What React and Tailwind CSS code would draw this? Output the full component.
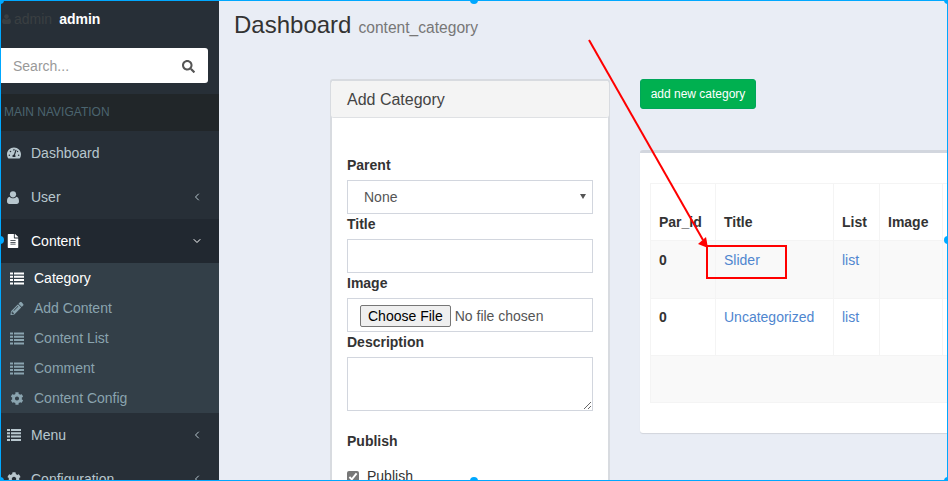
import { ChevronDown, ChevronLeft } from "lucide-react";
import { FaCog, FaFileAlt, FaPencilAlt, FaSearch, FaTachometerAlt } from "react-icons/fa";

const ListIcon = ({ className }) => (
  <svg className={className} viewBox="0 0 14 12" fill="currentColor">
    <path d="M0 0h3v2H0zM4 0h10v2H4zM0 3.3h3v2H0zM4 3.3h10v2H4zM0 6.6h3v2H0zM4 6.6h10v2H4zM0 10h3v2H0zM4 10h10v2H4z" />
  </svg>
);

const UserIcon = ({ className }) => (
  <svg className={className} viewBox="0 0 12 13" fill="currentColor">
    <circle cx="6" cy="3.3" r="3.1" />
    <path d="M2.6 5.7C3.5 6.8 4.7 7.2 6 7.2s2.5-.4 3.4-1.5c1.6.3 2.6 1.8 2.6 4.6 0 1.7-1 2.7-2.4 2.7H2.4C1 13 0 12 0 10.3c0-2.8 1-4.3 2.6-4.6z" />
  </svg>
);

const navTop = [
  { label: "Dashboard", icon: FaTachometerAlt },
  { label: "User", icon: UserIcon, arrow: true, iconClass: "w-[12px] h-[13px]" }
];

const subItems = [
  { label: "Category", icon: ListIcon, active: true },
  { label: "Add Content", icon: FaPencilAlt },
  { label: "Content List", icon: ListIcon },
  { label: "Comment", icon: ListIcon },
  { label: "Content Config", icon: FaCog }
];

const navBottom = [
  { label: "Menu", icon: ListIcon, arrow: true },
  { label: "Configuration", icon: FaCog, arrow: true }
];

const NavRow = ({ item }) => {
  const Icon = item.icon;
  return (
    <div className="h-[44px] flex items-center pl-[7px] pr-[16px] text-[#b8c7ce] text-[14px]">
      <span className="w-[24px] shrink-0"><Icon className={item.iconClass || "w-[14px] h-[14px]"} /></span>
      <span className="flex-1">{item.label}</span>
      {item.arrow && <ChevronLeft className="w-[12px] h-[12px]" strokeWidth={2} />}
    </div>
  );
};

const Sidebar = () => (
  <aside className="w-[219px] shrink-0 h-[481px] bg-[#272f37] overflow-hidden">
    <div className="h-[48px] flex items-center pb-[10px] pl-[2px] text-[14px]">
      <UserIcon className="w-[9px] h-[10px] text-[#3a3f42]" />
      <span className="ml-[3px] text-[#3a3f42]">admin</span>
      <span className="ml-[7px] text-white font-bold">admin</span>
    </div>
    <div className="w-[208px] h-[35px] bg-white rounded-r-[3px] flex items-center pl-[13px] pr-[13px] pt-[1px]">
      <span className="flex-1 text-[14px] text-[#999]">Search...</span>
      <FaSearch className="w-[13px] h-[13px] text-[#555]" />
    </div>
    <div className="mt-[11px] h-[37px] bg-[#212629] flex items-center pl-[4px] pb-[2px] text-[12px] text-[#4b646f]">MAIN NAVIGATION</div>
    {navTop.map((item) => <NavRow key={item.label} item={item} />)}
    <div className="h-[44px] bg-[#212830] flex items-center pl-[7px] pr-[16px] text-white text-[14px]">
      <span className="w-[24px] shrink-0"><FaFileAlt className="w-[12px] h-[14px]" /></span>
      <span className="flex-1">Content</span>
      <ChevronDown className="w-[12px] h-[12px]" strokeWidth={2} />
    </div>
    <div className="bg-[#333f48] h-[150px]">
      {subItems.map((item) => {
        const Icon = item.icon;
        return (
          <div key={item.label} className={`h-[30px] flex items-center pl-[10px] text-[14px] ${item.active ? "text-white" : "text-[#8aa4af]"}`}>
            <span className="w-[24px] shrink-0"><Icon className="w-[14px] h-[13px]" /></span>
            <span>{item.label}</span>
          </div>
        );
      })}
    </div>
    {navBottom.map((item) => <NavRow key={item.label} item={item} />)}
  </aside>
);

const labelClass = "block text-[14px] leading-[20px] font-bold text-[#333]";
const fieldClass = "block w-[246px] border border-[#d2d6de] bg-white text-[14px] text-[#555]";

const AddCategory = () => (
  <div className="w-[280px] shrink-0 h-[421px] -mt-[1px] bg-white border-x-2 border-t-2 border-[#d8dbe0] rounded-t-[3px]">
    <div className="h-[37px] -mx-[1px] bg-[#f4f4f4] border-b border-[#dfe1e4] rounded-[3px] flex items-center pl-[16px] pt-[1px] text-[16px] text-[#444]">Add Category</div>
    <div className="pl-[15px] pt-[37px]">
      <label className={labelClass}>Parent</label>
      <div className="relative w-[246px] mt-[5px]">
        <select className={`${fieldClass} h-[34px] pl-[16px] appearance-none`} defaultValue="None">
          <option>None</option>
        </select>
        <span className="absolute right-[7px] top-[14px] border-x-[3px] border-t-[5px] border-x-transparent border-t-[#555]" />
      </div>
      <label className={labelClass}>Title</label>
      <input type="text" className={`${fieldClass} h-[34px] mt-[5px]`} />
      <label className={labelClass}>Image</label>
      <div className={`${fieldClass} h-[34px] mt-[5px] pl-[12px] pt-[1px] flex items-center`}>
        <input type="file" className="w-[220px] text-[14px] file:mr-[4px] file:h-[22px] file:px-[7px] file:text-black file:bg-[#efefef] file:border file:border-[#767676] file:rounded-[2px]" />
      </div>
      <label className={labelClass}>Description</label>
      <textarea className={`${fieldClass} h-[54px] mt-[5px]`} />
      <label className={`${labelClass} mt-[20px]`}>Publish</label>
      <div className="mt-[15px] flex items-center gap-[8px] text-[14px] text-[#333]">
        <input type="checkbox" defaultChecked readOnly className="w-[12px] h-[12px] accent-[#777]" />
        <span>Publish</span>
      </div>
    </div>
  </div>
);

const cellBorder = "border border-[#f4f4f4] px-[8px] text-left";

const CategoryTable = () => (
  <div className="w-[420px] shrink-0 -mt-[1px]">
    <button className="w-[116px] h-[30px] bg-[#00b050] border border-[#00a65a] rounded-[3px] text-white text-[12px]">add new category</button>
    <div className="mt-[41px] h-[283px] bg-white border-t-[3px] border-[#d2d6de] rounded-[3px] shadow-[0_1px_1px_rgba(0,0,0,0.1)] pl-[10px] pt-[30px]">
      <table className="w-[400px] table-fixed border-collapse text-[14px] text-[#333]">
        <colgroup>
          <col className="w-[65px]" />
          <col className="w-[118px]" />
          <col className="w-[46px]" />
          <col className="w-[63px]" />
          <col />
        </colgroup>
        <tbody>
          <tr className="h-[57px]">
            {["Par_id", "Title", "List", "Image", ""].map((head, i) => (
              <th key={i} className={`${cellBorder} align-bottom pb-[7px] font-bold`}>{head}</th>
            ))}
          </tr>
          <tr className="h-[58px] bg-[#f9f9f9]">
            <td className={`${cellBorder} align-top pt-[9px] font-bold`}>0</td>
            <td className={`${cellBorder} align-top pt-[9px] text-[#4f86cf]`}>Slider</td>
            <td className={`${cellBorder} align-top pt-[9px] text-[#4f86cf]`}>list</td>
            <td className={cellBorder} />
            <td className={cellBorder} />
          </tr>
          <tr className="h-[57px]">
            <td className={`${cellBorder} align-top pt-[8px] font-bold`}>0</td>
            <td className={`${cellBorder} align-top pt-[8px] text-[#4f86cf]`}>Uncategorized</td>
            <td className={`${cellBorder} align-top pt-[8px] text-[#4f86cf]`}>list</td>
            <td className={cellBorder} />
            <td className={cellBorder} />
          </tr>
          <tr className="h-[47px] bg-[#f9f9f9]">
            <td colSpan={5} className={cellBorder} />
          </tr>
        </tbody>
      </table>
    </div>
  </div>
);

const Handle = ({ className }) => (
  <span className={`absolute w-[8px] h-[8px] rounded-full bg-[#00a8ff] ${className}`} />
);

const App = () => (
  <div className="relative w-[948px] h-[481px] overflow-hidden flex bg-[#e9edf5] font-['Liberation_Sans',Arial,sans-serif]">
    <Sidebar />
    <main className="flex-1 min-w-0 overflow-hidden">
      <div className="h-[80px] pl-[15px] pt-[10px] text-[#333]">
        <span className="text-[24px] leading-[30px]">Dashboard</span>
        <span className="ml-[7px] text-[15.6px] text-[#777]">content_category</span>
      </div>
      <div className="flex items-start pl-[111px]">
        <AddCategory />
        <div className="w-[30px] shrink-0" />
        <CategoryTable />
      </div>
    </main>

    {/* annotation drawn on top of the screenshot */}
    <svg className="absolute left-0 top-0 w-[948px] h-[481px] pointer-events-none" viewBox="0 0 948 481">
      <line x1="589" y1="40" x2="703" y2="240" stroke="#ff0000" strokeWidth="2" />
      <polygon points="708,248 698,244 706,237" fill="#ff0000" />
    </svg>
    <div className="absolute left-[706px] top-[245px] w-[81px] h-[34px] border-2 border-[#ff0000]" />

    {/* selection frame */}
    <div className="absolute inset-0 border border-[#00a8ff] pointer-events-none" />
    <Handle className="left-[470px] -top-[4px]" />
    <Handle className="left-[470px] -bottom-[4px]" />
    <Handle className="-left-[4px] top-[236px]" />
    <Handle className="-right-[4px] top-[236px]" />
    <Handle className="-left-[4px] -top-[4px]" />
    <Handle className="-right-[4px] -top-[4px]" />
    <Handle className="-left-[4px] -bottom-[4px]" />
    <Handle className="-right-[4px] -bottom-[4px]" />
  </div>
);

export default App;
